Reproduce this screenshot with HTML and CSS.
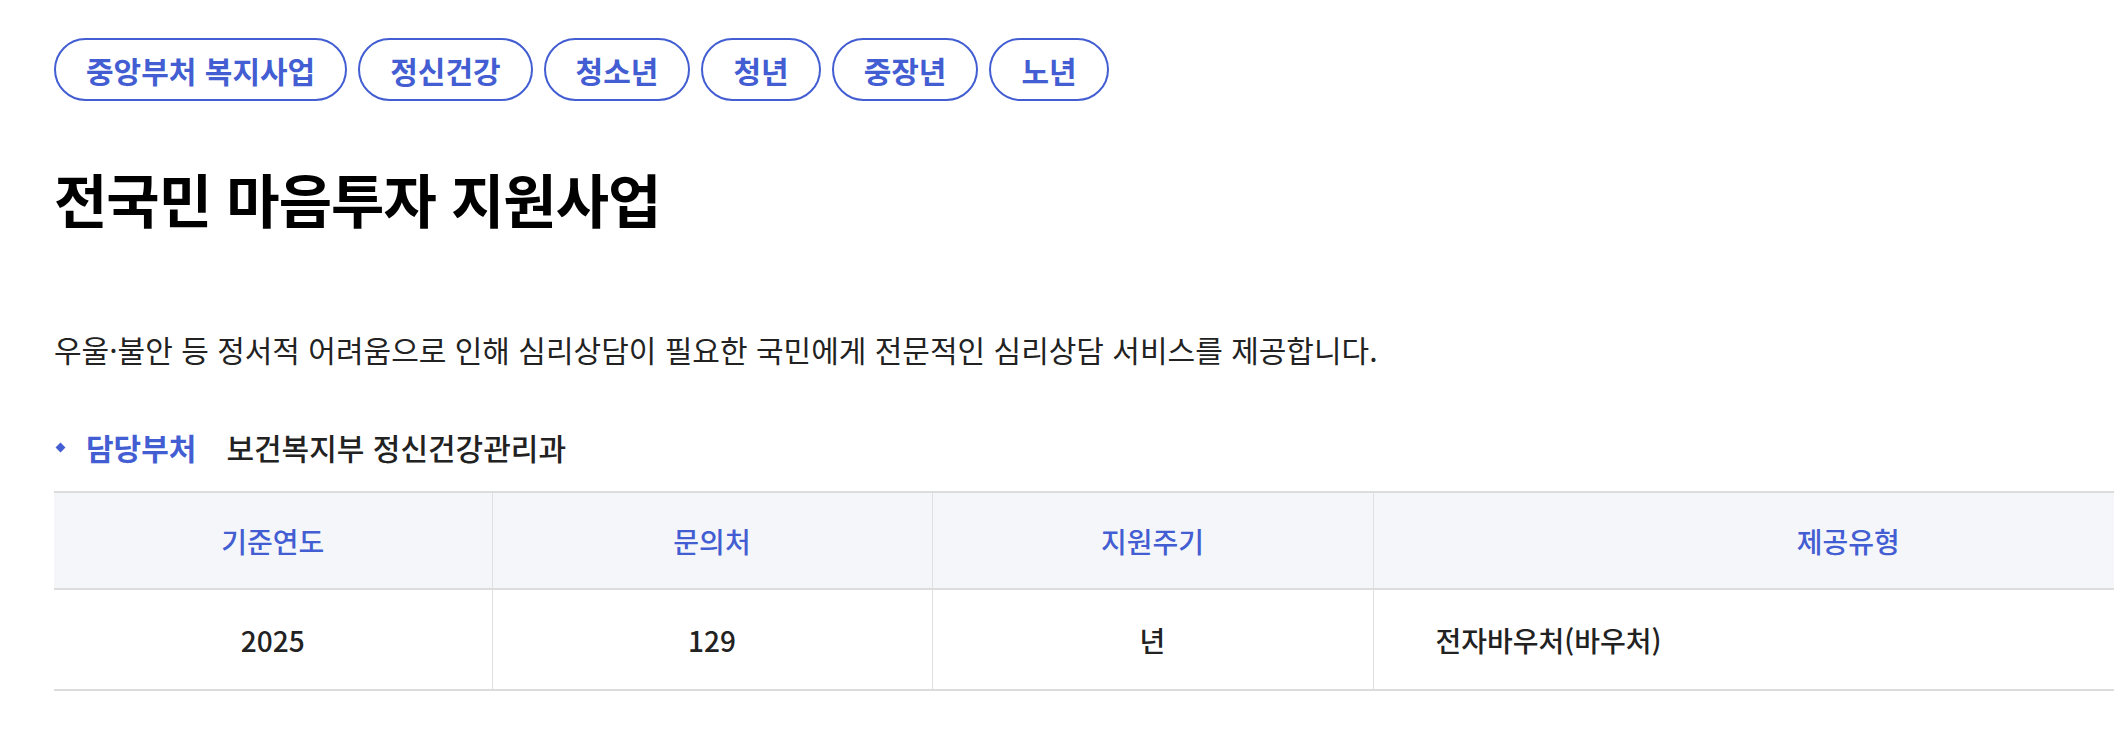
FILE: index.html
```html
<!DOCTYPE html>
<html lang="ko">
<head>
<meta charset="utf-8">
<title>전국민 마음투자 지원사업</title>
<link rel="stylesheet" href="styles.css">
</head>
<body>
<main class="page">
  <ul class="tags">
    <li class="tag">중앙부처 복지사업</li>
    <li class="tag">정신건강</li>
    <li class="tag">청소년</li>
    <li class="tag">청년</li>
    <li class="tag">중장년</li>
    <li class="tag">노년</li>
  </ul>
  <h1 class="title">전국민 마음투자 지원사업</h1>
  <p class="desc">우울·불안 등 정서적 어려움으로 인해 심리상담이 필요한 국민에게 전문적인 심리상담 서비스를 제공합니다.</p>
  <div class="dept">
    <span class="dept-label">담당부처</span>
    <span class="dept-value">보건복지부 정신건강관리과</span>
  </div>
  <div class="table-wrap">
    <table class="info">
      <colgroup>
        <col class="c1"><col class="c2"><col class="c3"><col class="c4">
      </colgroup>
      <thead>
        <tr>
          <th>기준연도</th>
          <th>문의처</th>
          <th>지원주기</th>
          <th>제공유형</th>
        </tr>
      </thead>
      <tbody>
        <tr>
          <td>2025</td>
          <td>129</td>
          <td>년</td>
          <td class="left">전자바우처(바우처)</td>
        </tr>
      </tbody>
    </table>
  </div>
</main>
</body>
</html>
```
FILE: styles.css
```css
html, body {
  margin: 0;
  padding: 0;
  background: #fff;
}
body {
  font-family: "Noto Sans CJK KR", "Noto Sans", sans-serif;
  color: #222;
  overflow: hidden;
}
.page {
  padding: 38px 0 0 54px;
}
.tags {
  list-style: none;
  margin: 0;
  padding: 0;
  display: flex;
  gap: 11px;
}
.tag {
  box-sizing: border-box;
  height: 63px;
  padding: 0 30px;
  border: 2px solid #435ed2;
  border-radius: 32px;
  color: #435ed2;
  font-size: 30px;
  font-weight: 700;
  display: flex;
  align-items: center;
  white-space: nowrap;
}
.title {
  margin: 62px 0 0;
  font-size: 58px;
  line-height: 70px;
  letter-spacing: -1px;
  font-weight: 700;
  color: #000;
}
.desc {
  margin: 96px 0 0;
  font-size: 30px;
  line-height: 40px;
  color: #222;
}
.dept {
  margin-top: 58px;
  display: flex;
  align-items: center;
  font-size: 30px;
  line-height: 40px;
}
.dept-label {
  position: relative;
  padding-left: 32px;
  color: #435ed2;
  font-weight: 700;
}
.dept-label::before {
  content: "";
  position: absolute;
  left: 3px;
  top: 17px;
  width: 7px;
  height: 7px;
  background: #435ed2;
  transform: rotate(45deg);
}
.dept-value {
  margin-left: 30px;
  color: #222;
  font-weight: 500;
}
.table-wrap {
  margin-top: 24px;
  overflow: hidden;
}
.info {
  width: 2269px;
  table-layout: fixed;
  border-collapse: collapse;
  border-top: 2px solid #dcdcdc;
  font-size: 28px;
}
.c1 { width: 438px; }
.c2 { width: 440px; }
.c3 { width: 441px; }
.c4 { width: 950px; }
.info th {
  height: 95px;
  padding: 0;
  background: #f5f6fa;
  color: #435ed2;
  font-weight: 500;
  border-bottom: 2px solid #dcdcdc;
  text-align: center;
}
.info td {
  height: 99px;
  padding: 0;
  color: #222;
  font-weight: 500;
  border-bottom: 2px solid #dcdcdc;
  text-align: center;
}
.info th + th,
.info td + td {
  border-left: 1px solid #e0e0e0;
}
.info td.left {
  text-align: left;
  padding-left: 62px;
}
```
